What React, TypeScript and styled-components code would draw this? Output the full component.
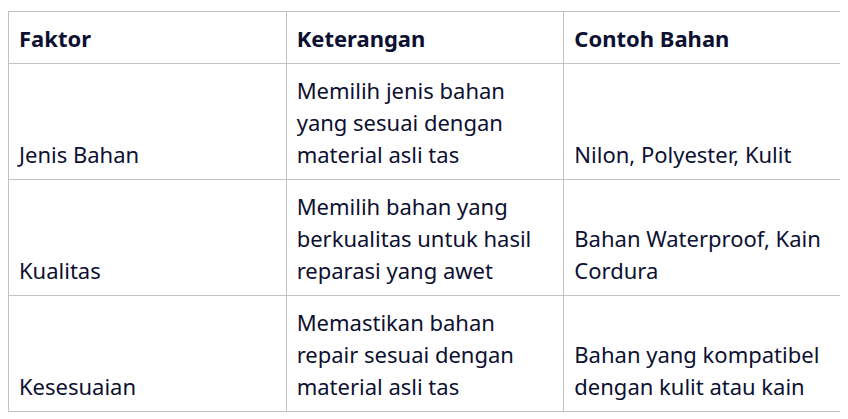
import styled, { createGlobalStyle } from 'styled-components';

const GlobalStyle = createGlobalStyle`
  body {
    margin: 8px;
    background: #ffffff;
    font-family: "Noto Sans", "Open Sans", sans-serif;
  }
`;

const Table = styled.table`
  width: 834px;
  margin-top: 3px;
  border-collapse: collapse;
  table-layout: fixed;
  color: #0c1031;
  font-size: 22px;
  line-height: 32px;
`;

const HeadCell = styled.th`
  border: 1px solid #c2c2c2;
  padding: 10px 10px 9px;
  text-align: left;
  font-weight: 700;
  vertical-align: bottom;
`;

const Cell = styled.td`
  border: 1px solid #c2c2c2;
  padding: 10px 10px 9px;
  vertical-align: bottom;
`;

const rows = [
  ['Jenis Bahan', 'Memilih jenis bahan yang sesuai dengan material asli tas', 'Nilon, Polyester, Kulit'],
  ['Kualitas', 'Memilih bahan yang berkualitas untuk hasil reparasi yang awet', 'Bahan Waterproof, Kain Cordura'],
  ['Kesesuaian', 'Memastikan bahan repair sesuai dengan material asli tas', 'Bahan yang kompatibel dengan kulit atau kain'],
];

const App: React.FC = () => (
  <>
    <GlobalStyle />
    <Table>
      <thead>
        <tr>
          <HeadCell>Faktor</HeadCell>
          <HeadCell>Keterangan</HeadCell>
          <HeadCell>Contoh Bahan</HeadCell>
        </tr>
      </thead>
      <tbody>
        {rows.map((row) => (
          <tr key={row[0]}>
            {row.map((text) => (
              <Cell key={text}>{text}</Cell>
            ))}
          </tr>
        ))}
      </tbody>
    </Table>
  </>
);

export default App;
